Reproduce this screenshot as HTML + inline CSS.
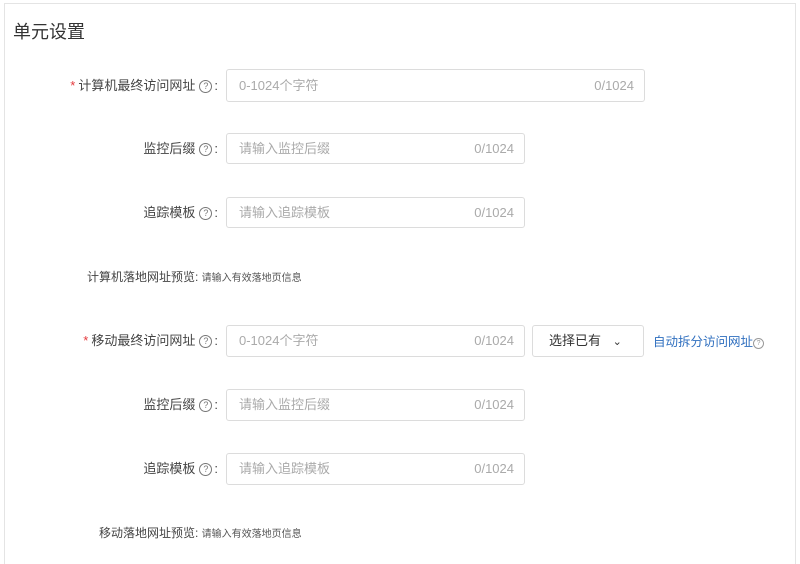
<!DOCTYPE html>
<html><head><meta charset="utf-8"><style>
body{margin:0;width:800px;height:557px;background:#fff;font-family:"Liberation Sans","Noto Sans CJK SC",sans-serif;position:relative;overflow:hidden}
.box{position:absolute;left:4px;top:3px;width:790px;height:560px;border:1px solid #e4e4e4;border-bottom:none}
.title{position:absolute;left:13px;top:18px;font-size:18px;color:#333}
.lab{position:absolute;right:582px;font-size:13px;color:#444;white-space:nowrap;line-height:16px}
.lab .q{display:inline-block;width:11px;height:11px;border:1px solid #777;border-radius:50%;font-size:9px;line-height:11px;text-align:center;color:#777;margin:0 2px 0 4px;vertical-align:1px}
.lab .s{color:#e4393c;margin-right:3px}
.in{position:absolute;left:226px;height:31px;border:1px solid #dcdcdc;border-radius:3px;box-sizing:border-box;font-size:13px;color:#aaa;line-height:29px}
.in .p{position:absolute;left:12px}
.in .c{position:absolute;right:10px}
.pv{position:absolute;font-size:12px;color:#444;white-space:nowrap}
.pv small{font-size:10px;color:#555}
.sel{position:absolute;left:532px;top:325px;width:112px;height:32px;border:1px solid #dcdcdc;border-radius:3px;box-sizing:border-box;font-size:13px;color:#333;line-height:30px;padding-left:16px}
.link{position:absolute;left:653px;top:331px;font-size:12.5px;color:#2f6fbf}
</style></head><body>
<div class="box"></div>
<div class="title">单元设置</div>

<div class="lab" style="top:78px"><span class="s">*</span>计算机最终访问网址<span class="q">?</span>:</div>
<div class="in" style="top:69px;width:419px;height:33px"><span class="p" style="line-height:31px">0-1024个字符</span><span class="c" style="line-height:31px">0/1024</span></div>

<div class="lab" style="top:141px">监控后缀<span class="q">?</span>:</div>
<div class="in" style="top:133px;width:299px"><span class="p">请输入监控后缀</span><span class="c">0/1024</span></div>

<div class="lab" style="top:205px">追踪模板<span class="q">?</span>:</div>
<div class="in" style="top:197px;width:299px"><span class="p">请输入追踪模板</span><span class="c">0/1024</span></div>

<div class="pv" style="left:87px;top:268px">计算机落地网址预览: <small>请输入有效落地页信息</small></div>

<div class="lab" style="top:333px"><span class="s">*</span>移动最终访问网址<span class="q">?</span>:</div>
<div class="in" style="top:325px;width:299px;height:32px"><span class="p">0-1024个字符</span><span class="c">0/1024</span></div>
<div class="sel">选择已有 <span style="display:inline-block;margin-left:8px;font-size:11px">&#8964;</span></div>
<div class="link">自动拆分访问网址<span style="display:inline-block;width:9px;height:9px;border:1px solid #999;border-radius:50%;font-size:7px;line-height:9px;text-align:center;color:#999;vertical-align:1px">?</span></div>

<div class="lab" style="top:397px">监控后缀<span class="q">?</span>:</div>
<div class="in" style="top:389px;width:299px;height:32px"><span class="p">请输入监控后缀</span><span class="c">0/1024</span></div>

<div class="lab" style="top:461px">追踪模板<span class="q">?</span>:</div>
<div class="in" style="top:453px;width:299px;height:32px"><span class="p">请输入追踪模板</span><span class="c">0/1024</span></div>

<div class="pv" style="left:99px;top:524px">移动落地网址预览: <small>请输入有效落地页信息</small></div>
</body></html>
